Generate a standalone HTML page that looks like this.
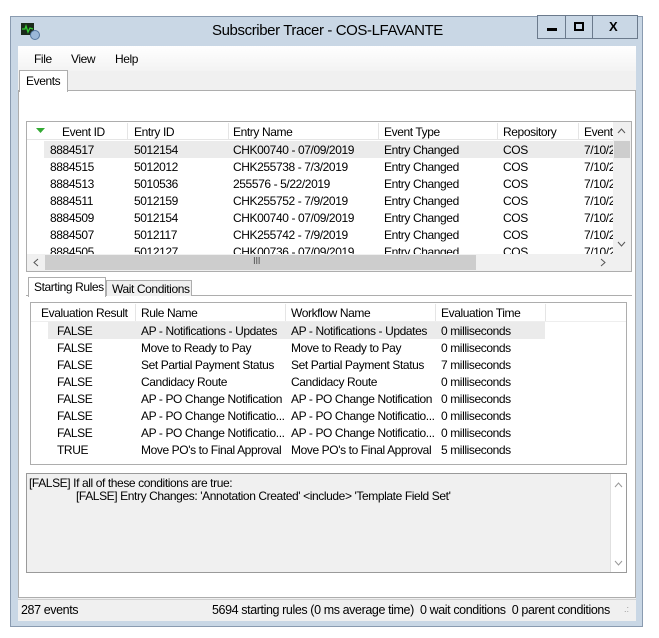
<!DOCTYPE html>
<html><head><meta charset="utf-8"><style>
*{box-sizing:border-box;margin:0;padding:0}
body{width:659px;height:638px;background:#fff;position:relative;overflow:hidden;font-family:"Liberation Sans",sans-serif;font-size:12px;color:#000;letter-spacing:-0.4px}
.a{position:absolute;white-space:nowrap}
#win{position:absolute;left:10px;top:16px;width:633px;height:611px;background:#c9d7e5;border:1px solid #8a9bb0}
.btn{position:absolute;top:15px;height:24px;border:1px solid #6b7a8c;background:#c9d7e5}
.sb{background:#f0f0f0}
</style></head><body>
<div id="win"></div>
<div class="a" style="left:21px;top:23px;width:13px;height:12px;background:#1a2a1a"></div>
<svg class="a" style="left:21px;top:23px" width="20" height="18"><polyline points="1,6 4,6 5,3 7,9 9,5 12,6" stroke="#3c3" fill="none" stroke-width="1.3"/><circle cx="14" cy="12" r="4.5" fill="#9bb8d8" stroke="#5578a0"/></svg>
<div class="a" style="left:212px;top:22px;font-size:15px;letter-spacing:-0.4px">Subscriber Tracer - COS-LFAVANTE</div>
<div class="btn" style="left:537px;width:29px"><div class="a" style="left:9px;top:12px;width:10px;height:3px;background:#000"></div></div>
<div class="btn" style="left:565px;width:28px"><div class="a" style="left:8px;top:6px;width:10px;height:9px;border:2px solid #000"></div></div>
<div class="btn" style="left:592px;width:46px"><div class="a" style="left:16px;top:3px;font-weight:bold;font-size:13px">X</div></div>
<div class="a" style="left:18px;top:46px;width:618px;height:575px;background:#f0f0f0"></div>
<div class="a" style="left:18px;top:46px;width:618px;height:25px;background:linear-gradient(#fff,#f3f3f3)"></div>
<div class="a" style="left:34px;top:52px">File</div>
<div class="a" style="left:71px;top:52px">View</div>
<div class="a" style="left:115px;top:52px">Help</div>
<div class="a" style="left:18px;top:90px;width:618px;height:508px;background:#fff;border:1px solid #adadad"></div>
<div class="a" style="left:19px;top:70px;width:49px;height:22px;background:#fff;border:1px solid #adadad;border-bottom:none"></div>
<div class="a" style="left:26px;top:74px">Events</div>
<div class="a" style="left:26px;top:121px;width:606px;height:151px;border:1px solid #adadad;background:#fff"></div>
<div class="a" style="left:27px;top:122px;width:586px;height:18px;background:#fff;border-bottom:1px solid #e5e5e5"></div>
<svg class="a" style="left:36px;top:128px" width="10" height="6"><polygon points="0,0 9,0 4.5,5" fill="#3a3"/></svg>
<div class="a" style="left:62px;top:125px">Event ID</div>
<div class="a" style="left:134px;top:125px">Entry ID</div>
<div class="a" style="left:233px;top:125px">Entry Name</div>
<div class="a" style="left:384px;top:125px">Event Type</div>
<div class="a" style="left:503px;top:125px">Repository</div>
<div class="a" style="left:584px;top:125px">Event</div>
<div class="a" style="left:127px;top:123px;width:1px;height:17px;background:#e5e5e5"></div>
<div class="a" style="left:228px;top:123px;width:1px;height:17px;background:#e5e5e5"></div>
<div class="a" style="left:378px;top:123px;width:1px;height:17px;background:#e5e5e5"></div>
<div class="a" style="left:497px;top:123px;width:1px;height:17px;background:#e5e5e5"></div>
<div class="a" style="left:578px;top:123px;width:1px;height:17px;background:#e5e5e5"></div>
<div class="a" style="left:44px;top:141px;width:569px;height:17px;background:#ebebeb"></div>
<div class="a" style="left:27px;top:140px;width:586px;height:114px;overflow:hidden">
<div style="position:relative">
<div class="a" style="left:23px;top:2px;line-height:17px">8884517<br>8884515<br>8884513<br>8884511<br>8884509<br>8884507<br>8884505</div>
<div class="a" style="left:107px;top:2px;line-height:17px">5012154<br>5012012<br>5010536<br>5012159<br>5012154<br>5012117<br>5012127</div>
<div class="a" style="left:206px;top:2px;line-height:17px">CHK00740 - 07/09/2019<br>CHK255738 - 7/3/2019<br>255576 - 5/22/2019<br>CHK255752 - 7/9/2019<br>CHK00740 - 07/09/2019<br>CHK255742 - 7/9/2019<br>CHK00736 - 07/09/2019</div>
<div class="a" style="left:357px;top:2px;line-height:17px">Entry Changed<br>Entry Changed<br>Entry Changed<br>Entry Changed<br>Entry Changed<br>Entry Changed<br>Entry Changed</div>
<div class="a" style="left:476px;top:2px;line-height:17px">COS<br>COS<br>COS<br>COS<br>COS<br>COS<br>COS</div>
<div class="a" style="left:557px;top:2px;line-height:17px;width:29px;overflow:hidden">7/10/2<br>7/10/2<br>7/10/2<br>7/10/2<br>7/10/2<br>7/10/2<br>7/10/2</div>
</div></div>
<div class="a sb" style="left:613px;top:122px;width:18px;height:132px"></div>
<svg class="a" style="left:617px;top:128px" width="9" height="6"><polyline points="1,5 4.5,1 8,5" fill="none" stroke="#555"/></svg>
<div class="a" style="left:614px;top:141px;width:16px;height:17px;background:#cdcdcd"></div>
<svg class="a" style="left:617px;top:241px" width="9" height="6"><polyline points="1,1 4.5,5 8,1" fill="none" stroke="#555"/></svg>
<div class="a sb" style="left:27px;top:254px;width:586px;height:17px"></div>
<svg class="a" style="left:33px;top:258px" width="6" height="9"><polyline points="5,1 1,4.5 5,8" fill="none" stroke="#555"/></svg>
<div class="a" style="left:45px;top:255px;width:431px;height:15px;background:#cdcdcd"></div>
<div class="a" style="left:253px;top:256px;font-size:10px;color:#555">III</div>
<svg class="a" style="left:600px;top:258px" width="6" height="9"><polyline points="1,1 5,4.5 1,8" fill="none" stroke="#555"/></svg>
<div class="a sb" style="left:613px;top:254px;width:18px;height:17px"></div>
<div class="a" style="left:26px;top:295px;width:606px;height:303px;border-top:1px solid #adadad"></div>
<div class="a" style="left:28px;top:277px;width:78px;height:20px;background:#fff;border:1px solid #adadad;border-bottom:none"></div>
<div class="a" style="left:34px;top:280px">Starting Rules</div>
<div class="a" style="left:106px;top:280px;width:86px;height:16px;background:#f0f0f0;border:1px solid #adadad;border-bottom:none"></div>
<div class="a" style="left:112px;top:282px">Wait Conditions</div>
<div class="a" style="left:30px;top:302px;width:597px;height:163px;border:1px solid #adadad;background:#fff"></div>
<div class="a" style="left:135px;top:304px;width:1px;height:17px;background:#e5e5e5"></div>
<div class="a" style="left:285px;top:304px;width:1px;height:17px;background:#e5e5e5"></div>
<div class="a" style="left:435px;top:304px;width:1px;height:17px;background:#e5e5e5"></div>
<div class="a" style="left:545px;top:304px;width:1px;height:17px;background:#e5e5e5"></div>
<div class="a" style="left:31px;top:321px;width:595px;height:1px;background:#eee"></div>
<div class="a" style="left:41px;top:306px">Evaluation Result</div>
<div class="a" style="left:141px;top:306px">Rule Name</div>
<div class="a" style="left:291px;top:306px">Workflow Name</div>
<div class="a" style="left:441px;top:306px">Evaluation Time</div>
<div class="a" style="left:48px;top:322px;width:497px;height:17px;background:#ebebeb"></div>
<div class="a" style="left:57px;top:323px;line-height:17px">FALSE<br>FALSE<br>FALSE<br>FALSE<br>FALSE<br>FALSE<br>FALSE<br>TRUE</div>
<div class="a" style="left:141px;top:323px;line-height:17px">AP - Notifications - Updates<br>Move to Ready to Pay<br>Set Partial Payment Status<br>Candidacy Route<br>AP - PO Change Notification<br>AP - PO Change Notificatio...<br>AP - PO Change Notificatio...<br>Move PO's to Final Approval</div>
<div class="a" style="left:291px;top:323px;line-height:17px">AP - Notifications - Updates<br>Move to Ready to Pay<br>Set Partial Payment Status<br>Candidacy Route<br>AP - PO Change Notification<br>AP - PO Change Notificatio...<br>AP - PO Change Notificatio...<br>Move PO's to Final Approval</div>
<div class="a" style="left:441px;top:323px;line-height:17px">0 milliseconds<br>0 milliseconds<br>7 milliseconds<br>0 milliseconds<br>0 milliseconds<br>0 milliseconds<br>0 milliseconds<br>5 milliseconds</div>
<div class="a" style="left:26px;top:473px;width:601px;height:100px;border:1px solid #9a9a9a;background:#f0f0f0"></div>
<div class="a" style="left:29px;top:477px;line-height:13px">[FALSE] If all of these conditions are true:<br><span style="padding-left:47px">[FALSE] Entry Changes: 'Annotation Created' &lt;include&gt; 'Template Field Set'</span></div>
<div class="a" style="left:610px;top:474px;width:16px;height:98px;background:#fff;border-left:1px solid #e0e0e0"></div>
<svg class="a" style="left:614px;top:482px" width="9" height="6"><polyline points="1,5 4.5,1 8,5" fill="none" stroke="#999"/></svg>
<svg class="a" style="left:614px;top:560px" width="9" height="6"><polyline points="1,1 4.5,5 8,1" fill="none" stroke="#999"/></svg>
<div class="a" style="left:18px;top:599px;width:618px;height:22px;background:#f0f0f0;border-top:1px solid #d0d0d0"></div>
<div class="a" style="left:21px;top:603px;font-size:12.5px">287 events</div>
<div class="a" style="left:212px;top:603px;font-size:12.5px">5694 starting rules (0 ms average time)&nbsp; 0 wait conditions&nbsp; 0 parent conditions</div>
<div class="a" style="left:624px;top:604px;font-size:9px;color:#999;letter-spacing:0">.:</div>
</body></html>
